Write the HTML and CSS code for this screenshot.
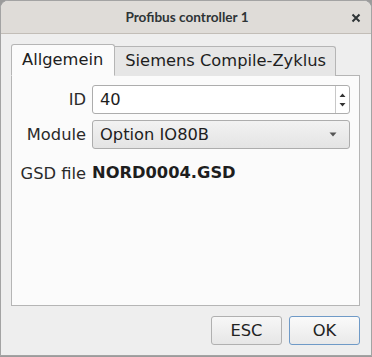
FILE: index.html
```html
<!DOCTYPE html>
<html>
<head>
<meta charset="utf-8">
<link rel="stylesheet" href="styles.css">
</head>
<body>
<div class="window">
  <div class="titlebar">
    <span class="title">Profibus controller 1</span>
    <span class="close">
      <svg width="10" height="10" viewBox="0 0 10 10"><path d="M1.5 1.5 L8.5 8.5 M8.5 1.5 L1.5 8.5" stroke="#2e3436" stroke-width="2" stroke-linecap="butt"/></svg>
    </span>
  </div>
  <div class="content">
    <div class="tabs">
      <div class="tab active">Allgemein</div>
      <div class="tab">Siemens Compile-Zyklus</div>
    </div>
    <div class="pane">
      <div class="form">
        <div class="label">ID</div>
        <div class="spin">
          <span class="value">40</span>
          <span class="arrows">
            <svg width="7" height="16" viewBox="0 0 7 16"><path d="M0.5 5 L3.5 1.5 L6.5 5 Z M0.5 11 L3.5 14.5 L6.5 11 Z" fill="#333"/></svg>
          </span>
        </div>
        <div class="label">Module</div>
        <div class="combo">
          <span class="value">Option IO80B</span>
          <svg width="8" height="5" viewBox="0 0 8 5"><path d="M0.5 0.5 L7.5 0.5 L4 4.5 Z" fill="#555"/></svg>
        </div>
        <div class="label low">GSD file</div>
        <div class="gsd low">NORD0004.GSD</div>
      </div>
    </div>
    <div class="buttons">
      <button class="btn">ESC</button>
      <button class="btn default">OK</button>
    </div>
  </div>
</div>
</body>
</html>
```
FILE: styles.css
```css
html, body {
  margin: 0;
  padding: 0;
  background: #9b9b9b;
}
body {
  width: 372px;
  height: 357px;
  overflow: hidden;
  font-family: "DejaVu Sans", sans-serif;
  font-size: 16.3px;
  color: #1e1e1e;
}
.window {
  box-sizing: border-box;
  width: 372px;
  height: 356px;
  border: 1px solid #a3a3a3;
  border-radius: 8px 8px 0 0;
  background: #eeeeee;
  display: flex;
  flex-direction: column;
  overflow: hidden;
}
.titlebar {
  height: 32px;
  flex: none;
  background: #dfdcd8;
  border-bottom: 1px solid #c2bdb7;
  display: flex;
  align-items: center;
  justify-content: center;
  position: relative;
}
.title {
  font-family: "Lato", sans-serif;
  font-weight: 700;
  font-size: 13.6px;
  color: #2e3436;
  padding-left: 2px;
}
.close {
  position: absolute;
  right: 10px;
  top: 12px;
  line-height: 0;
}
.content {
  flex: 1;
  display: flex;
  flex-direction: column;
  padding: 10px 11px 10px 10px;
}
.tabs {
  display: flex;
  align-items: flex-end;
  height: 32px;
  margin-bottom: -1px;
  position: relative;
  z-index: 1;
}
.tab {
  box-sizing: border-box;
  height: 30px;
  padding: 4px 9px 0 10px;
  border: 1px solid #b5b5b5;
  border-bottom: none;
  border-left: none;
  background: #e6e6e6;
  color: #1e1e1e;
  border-radius: 0 3px 0 0;
}
.tab.active {
  height: 32px;
  padding: 5px 11px 0 10px;
  background: #fbfbfb;
  border-left: 1px solid #b5b5b5;
  border-radius: 3px 3px 0 0;
  border-bottom: 1px solid #fbfbfb;
}
.pane {
  box-sizing: border-box;
  height: 231px;
  background: #fbfbfb;
  border: 1px solid #b5b5b5;
  padding: 9px 9px 0 0;
}
.form {
  display: grid;
  grid-template-columns: 74px 1fr;
  column-gap: 6px;
  row-gap: 6px;
  align-items: center;
}
.label {
  text-align: right;
  color: #2a2a2a;
}
.low {
  padding-top: 7px;
}
.spin, .combo {
  box-sizing: border-box;
  height: 29px;
  border: 1px solid #adadad;
  border-radius: 3px;
  display: flex;
  align-items: center;
  padding-left: 7px;
}
.spin {
  background: #ffffff;
}
.spin .value, .combo .value {
  flex: 1;
}
.arrows {
  width: 13px;
  height: 27px;
  border-left: 1px solid #c8c8c8;
  display: flex;
  align-items: center;
  justify-content: center;
}
.combo {
  background: linear-gradient(#f2f2f2, #e4e4e4);
  padding-right: 12px;
}
.gsd {
  font-weight: 700;
  height: 22px;
  line-height: 22px;
}
.buttons {
  display: flex;
  justify-content: flex-end;
  gap: 7px;
  margin-top: 10px;
}
.btn {
  box-sizing: border-box;
  width: 71px;
  height: 29px;
  font-family: "DejaVu Sans", sans-serif;
  font-size: 16.3px;
  color: #222;
  background: linear-gradient(#f7f7f7, #e6e6e6);
  border: 1px solid #b0b0b0;
  border-radius: 3px;
  padding: 0;
}
.btn.default {
  border-color: #6f9ac7;
  background: linear-gradient(#fafafa, #e9e9e9);
}
```
